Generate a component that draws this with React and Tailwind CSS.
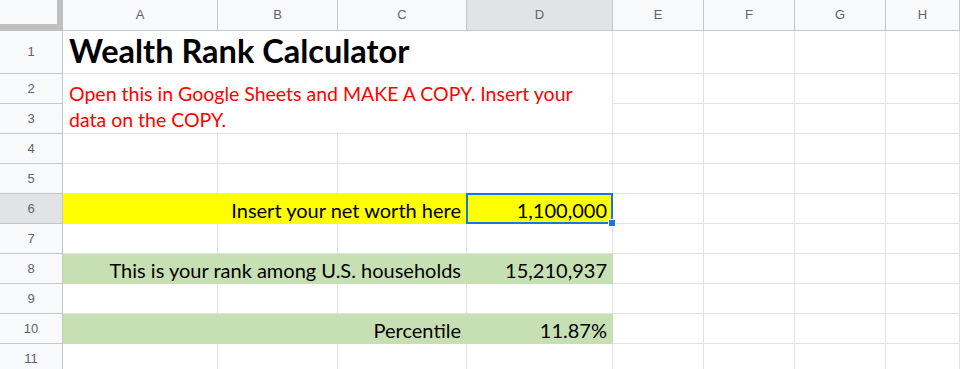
import React from 'react';

// Sheet header letters
const COLS = ['A', 'B', 'C', 'D', 'E', 'F', 'G', 'H'];

const Blank = () => <div className="border-r border-b border-[#e2e2e3] bg-white" />;

const RowHead = ({ n, active = false }) => (
  <div
    className={`flex items-center justify-center border-r border-b border-[#c4c7c5] font-['Liberation_Sans',Arial,sans-serif] text-[13px] text-[#5f6368] ${
      active ? 'bg-[#e1e3e6]' : 'bg-[#f8f9fa]'
    }`}
  >
    {n}
  </div>
);

const ColHead = ({ label, active = false }) => (
  <div
    className={`flex items-center justify-center border-r border-b border-[#c4c7c5] font-['Liberation_Sans',Arial,sans-serif] text-[13px] text-[#5f6368] ${
      active ? 'bg-[#e1e3e6]' : 'bg-[#f8f9fa]'
    }`}
  >
    {label}
  </div>
);

// Filled, right-aligned value cell (fill hides the gridlines)
const FillCell = ({ fill, span = false, children, className = '' }) => (
  <div
    className={`flex items-end justify-end pr-[5px] pb-[3px] border-r border-b font-['Lato','Open_Sans',sans-serif] text-[20px] text-black leading-none whitespace-nowrap ${fill} ${
      span ? 'col-span-3' : ''
    } ${className}`}
  >
    {children}
  </div>
);

const blanks = (count, key) =>
  Array.from({ length: count }, (_, i) => <Blank key={`${key}-${i}`} />);

export default function App() {
  return (
    <div className="w-[960px] h-[369px] overflow-hidden bg-white">
      <div className="grid grid-cols-[63px_155px_120px_129px_146px_91px_91px_91px_1fr] grid-rows-[31px_43px_repeat(10,30px)]">
        {/* Header row */}
        <div className="bg-[#f8f9fa] border-r-[6px] border-b-[7px] border-[#c0c0c0]" />
        {COLS.map(c => (
          <ColHead key={c} label={c} active={c === 'D'} />
        ))}

        {/* Row 1 */}
        <RowHead n={1} />
        <div className="col-span-4 flex items-end pl-[6px] pb-[6px] border-r border-b border-[#e2e2e3] font-['Lato','Open_Sans',sans-serif] text-[32.5px] font-bold text-black leading-none whitespace-nowrap">
          Wealth Rank Calculator
        </div>
        {blanks(4, 'r1')}

        {/* Rows 2-3 (merged) */}
        <RowHead n={2} />
        <div className="col-span-4 row-span-2 flex items-end pl-[6px] pb-0 border-r border-b border-[#e2e2e3] font-['Lato','Open_Sans',sans-serif] text-[19.5px] text-[#ff0000] leading-[26px] whitespace-nowrap">
          <span>
            Open this in Google Sheets and MAKE A COPY. Insert your
            <br />
            data on the COPY.
          </span>
        </div>
        {blanks(4, 'r2')}
        <RowHead n={3} />
        {blanks(4, 'r3')}

        {/* Rows 4-5 */}
        <RowHead n={4} />
        {blanks(8, 'r4')}
        <RowHead n={5} />
        {blanks(8, 'r5')}

        {/* Row 6 - input */}
        <RowHead n={6} active />
        <FillCell span fill="bg-[#ffff00] border-[#ffff00]">
          Insert your net worth here
        </FillCell>
        <FillCell fill="bg-[#ffff00] border-[#ffff00]" className="relative">
          1,100,000
          <div className="absolute -left-px -top-px -right-px -bottom-px border-2 border-[#1a73e8] pointer-events-none" />
          <div className="absolute -right-[4px] -bottom-[4px] w-[8px] h-[8px] bg-[#1a73e8] border border-white" />
        </FillCell>
        {blanks(4, 'r6')}

        {/* Row 7 */}
        <RowHead n={7} />
        {blanks(8, 'r7')}

        {/* Row 8 - rank */}
        <RowHead n={8} />
        <FillCell span fill="bg-[#c6e0b4] border-[#c6e0b4]">
          This is your rank among U.S. households
        </FillCell>
        <FillCell fill="bg-[#c6e0b4] border-[#c6e0b4]">15,210,937</FillCell>
        {blanks(4, 'r8')}

        {/* Row 9 */}
        <RowHead n={9} />
        {blanks(8, 'r9')}

        {/* Row 10 - percentile */}
        <RowHead n={10} />
        <FillCell span fill="bg-[#c6e0b4] border-[#c6e0b4]">
          Percentile
        </FillCell>
        <FillCell fill="bg-[#c6e0b4] border-[#c6e0b4]">11.87%</FillCell>
        {blanks(4, 'r10')}

        {/* Row 11 */}
        <RowHead n={11} />
        {blanks(8, 'r11')}
      </div>
    </div>
  );
}
